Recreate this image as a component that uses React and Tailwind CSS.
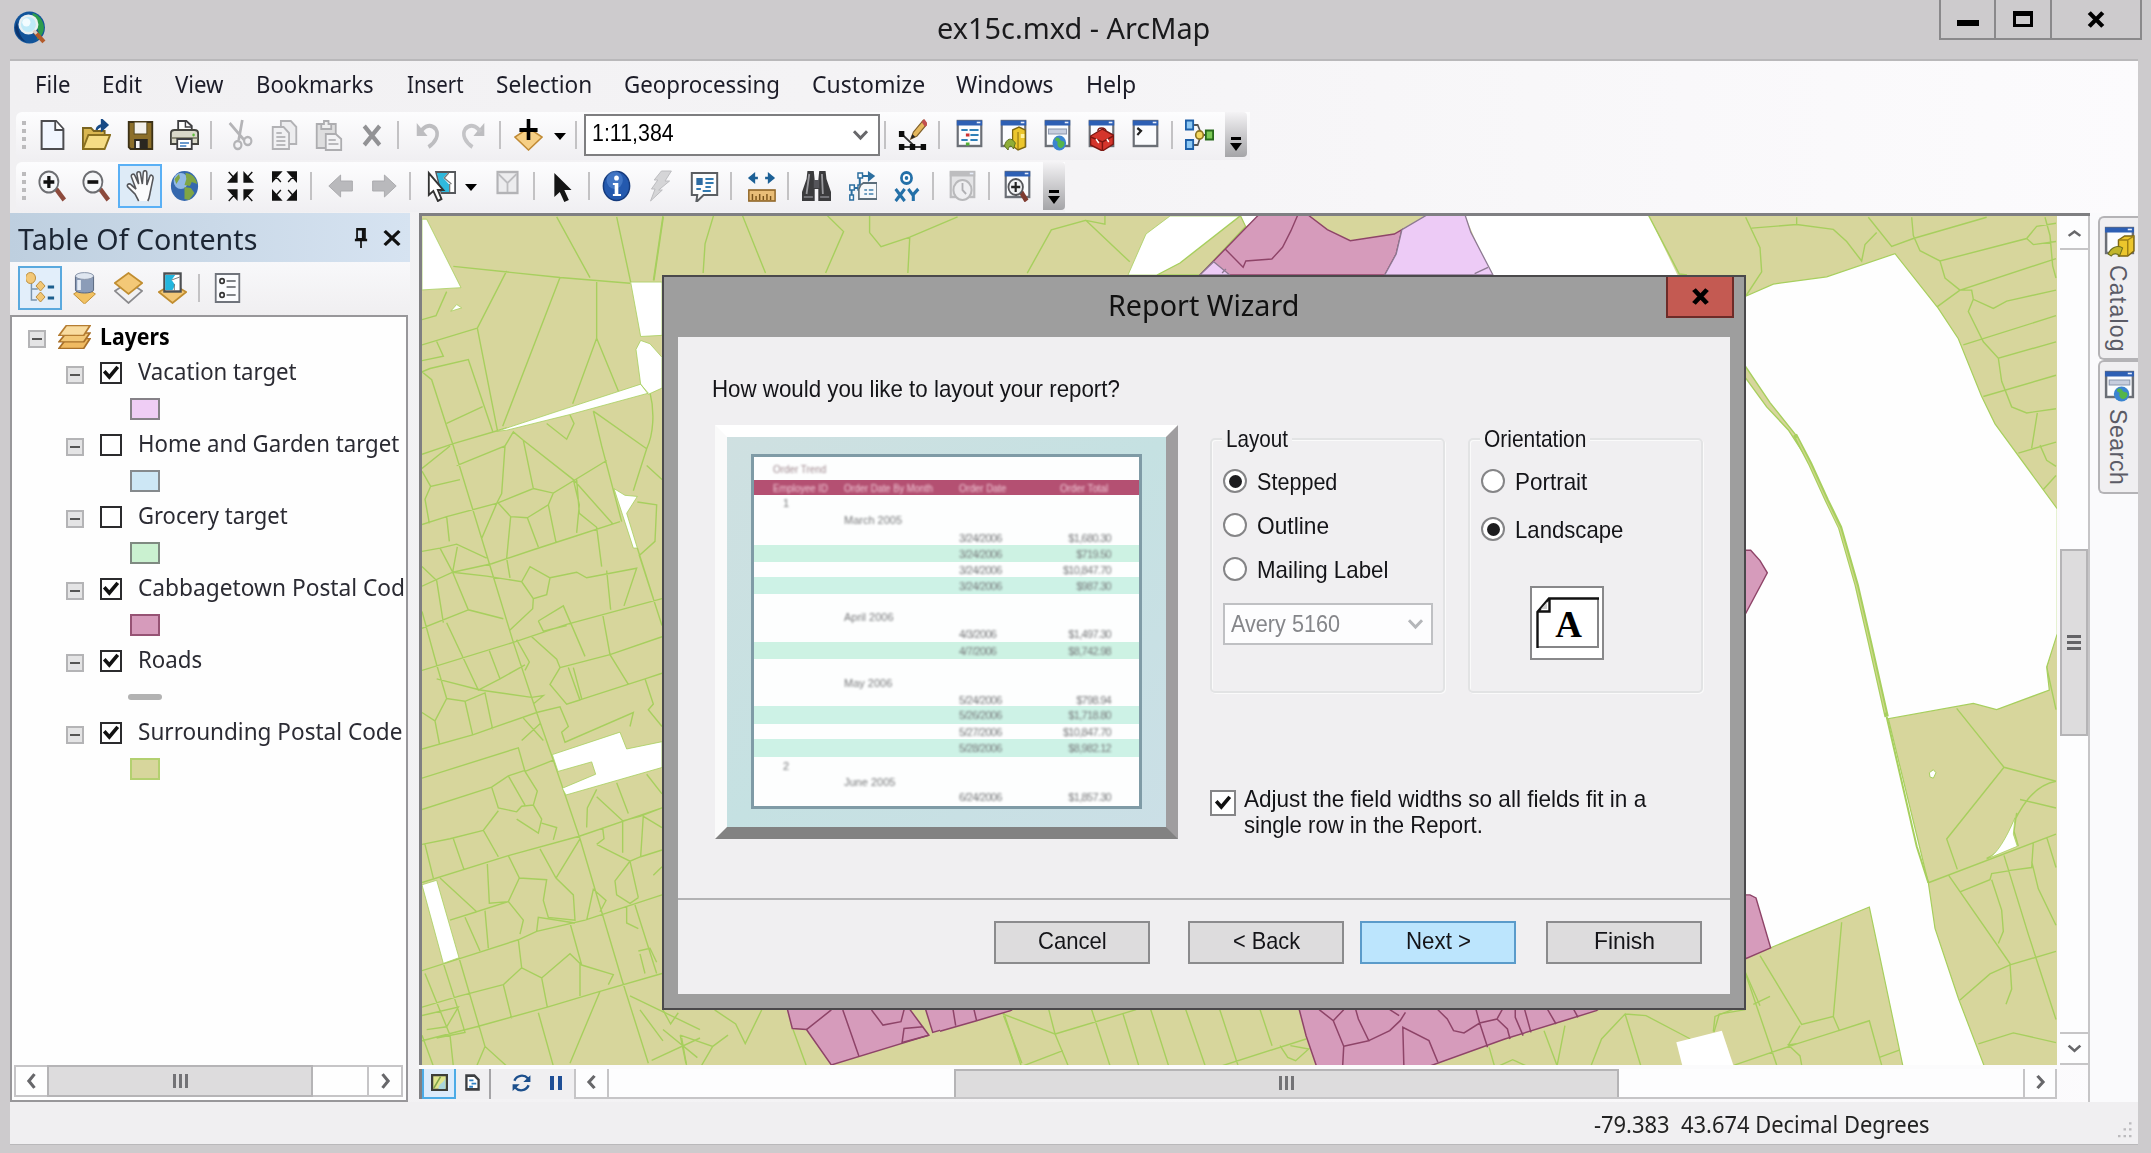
import React, { useLayoutEffect, useRef, useState } from "react";

/* Text squeezed or stretched horizontally to the width of its box. */
function Fit({ className, children }) {
  const outer = useRef(null);
  const inner = useRef(null);
  const [scale, setScale] = useState(1);
  useLayoutEffect(() => {
    setScale(outer.current.clientWidth / inner.current.offsetWidth);
  }, []);
  return (
    <span ref={outer} className={"inline-block shrink-0 whitespace-nowrap " + className}>
      <span ref={inner} className="inline-block origin-left whitespace-pre" style={{ transform: `scaleX(${scale})` }}>
        {children}
      </span>
    </span>
  );
}

const Svg = ({ children, className = "h-8 w-8" }) => (
  <svg viewBox="0 0 32 32" preserveAspectRatio="none" className={"shrink-0 " + className} fill="none">
    {children}
  </svg>
);

const WindowFrame = ({ gray }) => (
  <>
    <rect x="3" y="2" width="26" height="25" fill={gray ? "#e4e4e6" : "#fbfcfe"} stroke={gray ? "#bdbdbf" : "#6b6f76"} strokeWidth="2.4" />
    <rect x="2" y="1.5" width="28" height="5" fill={gray ? "#bdbdbf" : "#2d5fb4"} />
    <path d="M24 3.5h4" stroke="#e8eefa" strokeWidth="1.6" />
  </>
);

const icons = {
  app: (
    <>
      <ellipse cx="15" cy="16" rx="15" ry="15.5" fill="#12549a" />
      <path d="M18 2c6 1 11 8 11 14s-4 10-7 12c1-4 3-6 1-10s-5-3-5-7z" fill="#2e9c4c" />
      <path d="M3 10c1 9 3 16 9 20C6 29 1 23 1 16z" fill="#0b3670" />
      <circle cx="14" cy="13" r="8.5" fill="#bfeaf8" stroke="#e9f0f2" strokeWidth="2.4" />
      <circle cx="12" cy="11" r="4" fill="#f2fcff" />
      <path d="M20 20l9 10" stroke="#b35a2a" strokeWidth="4" />
      <path d="M19 19l3 3" stroke="#d8d0c8" strokeWidth="3" />
    </>
  ),
  newdoc: (
    <>
      <path d="M4 2h16l8 8v20H4z" fill="#f1f6ff" stroke="#4c4c50" strokeWidth="2.2" />
      <path d="M19 2v9h9" fill="#fff" stroke="#4c4c50" strokeWidth="2" />
    </>
  ),
  open: (
    <>
      <path d="M1 30V9h9l3 3h12v5" fill="#d9b650" stroke="#7a6420" strokeWidth="2" />
      <path d="M1 30l6-14h24l-6 14z" fill="#f5dc84" stroke="#8a7020" strokeWidth="2" />
      <path d="M16 11c1-4 4-5 9-5M22 1l6 5-6 5z" stroke="#174a86" strokeWidth="2.4" fill="#174a86" />
    </>
  ),
  save: (
    <>
      <path d="M3 3h26v27H5l-2-2z" fill="#8c6f2a" stroke="#3c3117" strokeWidth="2" />
      <rect x="9" y="3" width="14" height="12" fill="#f3f1ec" stroke="#54461e" />
      <rect x="9" y="20" width="15" height="10" fill="#2a2720" />
      <rect x="11" y="22" width="4" height="7" fill="#f3f3f3" />
    </>
  ),
  print: (
    <>
      <path d="M9 14V2h9l6 5v7" fill="#fff" stroke="#3f3f42" strokeWidth="2" />
      <path d="M17 2v6h7" stroke="#3f3f42" strokeWidth="1.6" />
      <path d="M1 14c0-2 2-3 4-3h22c2 0 4 1 4 3v11H1z" fill="#d9d8c9" stroke="#44443f" strokeWidth="2" />
      <path d="M2 19h28" stroke="#8d8c78" strokeWidth="2" />
      <circle cx="26" cy="16" r="1.4" fill="#5bbd3a" />
      <rect x="8" y="20" width="16" height="10" fill="#fff" stroke="#3f3f42" strokeWidth="2" />
      <path d="M11 24h10M11 27h7" stroke="#3b79bd" strokeWidth="1.6" />
    </>
  ),
  cut: (
    <>
      <path d="M4 4l16 17M18 1l-4 20" stroke="#b4b4b7" strokeWidth="3" />
      <circle cx="13" cy="26" r="4" stroke="#b4b4b7" strokeWidth="2.4" />
      <circle cx="24" cy="22" r="4" stroke="#b4b4b7" strokeWidth="2.4" />
    </>
  ),
  copy: (
    <>
      <path d="M12 2h11l6 6v17H12z" fill="#ededef" stroke="#b2b2b5" strokeWidth="2" />
      <path d="M3 8h12l6 6v16H3z" fill="#f1f1f3" stroke="#b2b2b5" strokeWidth="2" />
      <path d="M7 14h6M7 18h10M7 22h10M7 26h10" stroke="#b9b9bc" strokeWidth="1.8" />
    </>
  ),
  paste: (
    <>
      <rect x="3" y="5" width="21" height="24" fill="#dededf" stroke="#adadb0" strokeWidth="2" />
      <path d="M8 10V5h3V2h5v3h3v5z" fill="#efeff0" stroke="#adadb0" strokeWidth="2" />
      <path d="M13 15h11l6 5v11H13z" fill="#f3f3f5" stroke="#adadb0" strokeWidth="2" />
      <path d="M16 21h8M16 25h11" stroke="#b9b9bc" strokeWidth="1.8" />
    </>
  ),
  del: <path d="M8 7l17 19M25 7L8 26" stroke="#929295" strokeWidth="4.6" />,
  undo: (
    <>
      <path d="M3 4v13h12z" fill="#bdbdc0" />
      <path d="M7 13c5-7 12-8 17-3 4 6 0 13-8 18" stroke="#bdbdc0" strokeWidth="4" />
    </>
  ),
  redo: (
    <>
      <path d="M29 4v13H17z" fill="#bdbdc0" />
      <path d="M25 13C20 6 13 5 8 10c-4 6 0 13 8 18" stroke="#c4c4c7" strokeWidth="4" />
    </>
  ),
  add: (
    <>
      <path d="M16 9l15 9-15 13L1 18z" fill="#f6cf85" stroke="#c08a35" strokeWidth="1.6" />
      <path d="M16 0v21M6 11h20" stroke="#000" strokeWidth="4" />
    </>
  ),
  editor: (
    <>
      <path d="M4 15l14 12M4 28h25" stroke="#333" strokeWidth="1.8" />
      <path d="M1 12h6v6H1zM1 25h6v6H1zM13 25h6v6h-6zM25 25h6v6h-6z" fill="#0c0c0c" />
      <path d="M14 20l3-7L28 1l4 4-11 12z" fill="#e5b85d" stroke="#80602a" strokeWidth="1.2" />
      <path d="M26 3l3-3 4 5-3 3z" fill="#c15050" />
      <path d="M14 20l2-5 3 3z" fill="#222" />
    </>
  ),
  tocwin: (
    <>
      <WindowFrame />
      <path d="M7 11h7M16 11h10M7 21h7M17 16h9M17 21h8" stroke="#2f7fb8" strokeWidth="2.2" />
      <path d="M12 16h4" stroke="#cc3030" strokeWidth="3" />
      <path d="M12 25h4" stroke="#54b035" strokeWidth="3" />
    </>
  ),
  catalog: (
    <>
      <WindowFrame />
      <path d="M15 11l7-3 7 3v17l-8 3-6-4z" fill="#ecc62c" stroke="#7c6511" strokeWidth="1.4" />
      <path d="M21 13v17" stroke="#9c7f14" strokeWidth="1.4" />
      <path d="M24 15h4v4h-4z" fill="#fff2a0" />
      <path d="M6 27c2-8 8-9 12-3l-2 6c-2-4-5-4-6 1z" fill="#8fae38" stroke="#5b6d1c" />
    </>
  ),
  catalogTab: (
    <>
      <WindowFrame />
      <path d="M15 14l6-4h9v15l-6 5h-9z" fill="#ecc62c" stroke="#7c6511" strokeWidth="1.4" />
      <path d="M15 14h9v15M24 14l6-4" stroke="#9c7f14" strokeWidth="1.4" />
      <path d="M5 28c3-7 9-9 14-6l-3 8c-2-3-6-3-8 0z" fill="#c2b62c" stroke="#6b6d1c" />
    </>
  ),
  search: (
    <>
      <WindowFrame />
      <rect x="6" y="10" width="20" height="5" fill="#c7cede" stroke="#8a95ab" />
      <circle cx="18" cy="24" r="7.5" fill="#3b84d0" />
      <path d="M14 19c5-2 4 3 7 3s4 3 1 6-7-1-6-4-4-1-2-5z" fill="#54b54b" />
    </>
  ),
  toolbox: (
    <>
      <WindowFrame />
      <path d="M4 17l13-7 12 6v9l-12 7L4 26z" fill="#d5352c" stroke="#7c1712" strokeWidth="1.4" />
      <path d="M4 18l13 5 12-6M17 23v8M12 12c0-4 8-4 9 0" stroke="#7c1712" strokeWidth="1.6" />
      <path d="M10 20l3 4M22 20l2 3" stroke="#fff" strokeWidth="1.6" />
    </>
  ),
  python: (
    <>
      <WindowFrame />
      <path d="M7 9l4 3-4 4" stroke="#222" strokeWidth="2.4" />
    </>
  ),
  model: (
    <>
      <path d="M10 6h4l4 9-4 11h-4M20 16h6" stroke="#555" strokeWidth="1.8" />
      <rect x="1" y="1.5" width="8" height="9" fill="#8dc8f4" stroke="#1d5fa8" strokeWidth="2" />
      <rect x="1" y="21" width="8" height="9" fill="#8dc8f4" stroke="#1d5fa8" strokeWidth="2" />
      <circle cx="16" cy="16" r="4.2" fill="#f4d860" stroke="#8c7420" strokeWidth="1.8" />
      <rect x="23" y="11.5" width="8" height="9" fill="#7cc956" stroke="#286a1c" strokeWidth="2" />
    </>
  ),
  zoomin: (
    <>
      <path d="M20 19l9 11" stroke="#8d4a3c" strokeWidth="5" />
      <circle cx="12" cy="12" r="10.5" fill="#f6f7f9" stroke="#6d6e72" strokeWidth="2" />
      <path d="M12 6v12M6 12h12" stroke="#111" strokeWidth="3.6" />
    </>
  ),
  zoomout: (
    <>
      <path d="M20 19l9 11" stroke="#8d4a3c" strokeWidth="5" />
      <circle cx="12" cy="12" r="10.5" fill="#f6f7f9" stroke="#6d6e72" strokeWidth="2" />
      <path d="M6 12h12" stroke="#111" strokeWidth="3.6" />
    </>
  ),
  hand: (
    <path
      d="M14 31l-4-7-8-7c-2-3 2-4 4-2l5 4L6 7c-1-3 3-4 4-1l4 8-2-10c0-3 4-3 4 0l2 10 1-11c0-3 4-3 4 0v12l3-8c1-3 4-2 4 1l-3 13c-1 4-1 7-3 10"
      fill="#fbfbfc" stroke="#55565a" strokeWidth="1.7"
    />
  ),
  globe: (
    <>
      <circle cx="16" cy="16" r="15" fill="#3568ae" />
      <circle cx="12" cy="11" r="8" fill="#a9cdf3" opacity=".8" />
      <path d="M17 3c7 0 12 5 13 11l-6-2-2 4-6-1 2-6zM16 17l7 1 4 5-6 7-5-1zM5 9l5-5 1 4-4 6z" fill="#7fa544" />
    </>
  ),
  shrink: (
    <path d="M3 2l7 7M12 3v9H3zM29 2l-7 7M20 3v9h9zM3 31l7-7M12 29v-9H3zM29 31l-7-7M20 29v-9h9z" stroke="#111" strokeWidth="1.6" fill="#111" />
  ),
  grow: (
    <path d="M12 12L5 5M3 11V2h9zM20 12l7-7M29 11V2h-9zM12 20l-7 7M3 21v9h9zM20 20l7 7M29 21v9h-9z" stroke="#111" strokeWidth="1.6" fill="#111" />
  ),
  back: <path d="M2 16L15 5v6h13v10H15v6z" fill="#b9b9bc" stroke="#aaaaad" />,
  fwd: <path d="M30 16L17 5v6H4v10h13v6z" fill="#b9b9bc" stroke="#aaaaad" />,
  select: (
    <>
      <path d="M10 2h21v21H16z" fill="#fff" stroke="#55585c" strokeWidth="2" />
      <path d="M11 3h12l-5 5 7 7v7h-9z" fill="#2fb9dd" />
      <path d="M24 3l-5 5 8 6M25 14v8" stroke="#777" strokeWidth="1.4" />
      <path d="M2 3v22l5-4 5 10 4-2-4-9h6z" fill="#fff" stroke="#333" strokeWidth="2" />
    </>
  ),
  clear: (
    <>
      <rect x="5" y="2" width="22" height="21" fill="#ececee" stroke="#b3b3b6" strokeWidth="2.4" />
      <path d="M6 4l10 9v9M26 4l-10 9" stroke="#bdbdc0" strokeWidth="2" />
    </>
  ),
  pointer: <path d="M7 3v24l6-5 5 10 5-2-5-10h8z" fill="#151515" />,
  info: (
    <>
      <circle cx="16" cy="16" r="14.5" fill="#2459ae" stroke="#153a7c" strokeWidth="1.6" />
      <circle cx="14" cy="10" r="9" fill="#5e92da" opacity=".5" />
      <circle cx="16" cy="8" r="2.6" fill="#fff" />
      <path d="M12 13h6v11h3v2h-9v-2h2v-9h-2z" fill="#fff" />
    </>
  ),
  bolt: <path d="M17 1h11l-7 10h5L14 20h4L5 31l5-12H6l7-9H9z" fill="#d5d5d7" stroke="#bbbbbe" />,
  html: (
    <>
      <path d="M2 3h28v22H15l-8 7 1-7H2z" fill="#fdfdfd" stroke="#5b5e62" strokeWidth="2.2" />
      <rect x="7" y="8" width="7" height="7" fill="#2d6ba2" />
      <path d="M17 9h9M17 13h9M7 19h5M17 17h6M14 21h9" stroke="#3179b0" strokeWidth="2" />
    </>
  ),
  measure: (
    <>
      <path d="M3 8h9M20 8h9" stroke="#1c6096" strokeWidth="2.6" />
      <path d="M9 2L1 8l8 6zM23 2l8 6-8 6z" fill="#1c6096" />
      <rect x="2" y="20" width="29" height="11" fill="#e9bd77" stroke="#8f6526" strokeWidth="1.6" />
      <path d="M6 30v-6M10 30v-4M14 30v-6M18 30v-4M22 30v-6M26 30v-4" stroke="#7a541b" strokeWidth="1.6" />
    </>
  ),
  binoc: (
    <>
      <path d="M6 1h7l1 9h4l1-9h7l1 8 5 13v9H18V19h-4v12H0V22L5 9z" fill="#3b3b3d" />
      <rect x="13" y="10" width="6" height="8" fill="#55555a" />
      <path d="M8 4L5 24M22 4l1 20" stroke="#9a9a9e" strokeWidth="2" />
      <path d="M2 27h10M20 27h10" stroke="#85858a" strokeWidth="1.6" />
    </>
  ),
  route: (
    <>
      <path d="M4 28v-10h9V6h11" stroke="#2b6e9f" strokeWidth="2.2" />
      <path d="M22 1l8 5-8 6z" fill="#2b6e9f" />
      <path d="M2 25h4v5H2zM2 15h5v5H2zM11 15h5v5h-5zM11 3h5v5h-5z" fill="#fff" stroke="#2b6e9f" strokeWidth="1.6" />
      <path d="M14 15l3-2h15v16H12V19z" fill="#f6f8fa" stroke="#5b6d7a" strokeWidth="1.8" />
      <path d="M18 20h3M23 20h5M18 24h3M23 24h5" stroke="#6f9ec0" strokeWidth="1.8" />
    </>
  ),
  xy: (
    <>
      <circle cx="16" cy="8" r="5.6" fill="#fff" stroke="#2470a8" strokeWidth="3" />
      <circle cx="16" cy="8" r="2" fill="#2470a8" />
      <path d="M4 19l10 12M14 19L4 31M18 19l5 6 6-6M23.500 25v6" stroke="#2470a8" strokeWidth="3.4" />
    </>
  ),
  clock: (
    <>
      <WindowFrame gray />
      <circle cx="16" cy="20" r="10" fill="#efeff1" stroke="#b9b9bb" strokeWidth="2.2" />
      <path d="M16 13v7l4 4" stroke="#b0b0b3" strokeWidth="2" />
    </>
  ),
  viewer: (
    <>
      <WindowFrame />
      <path d="M20 22l6 9" stroke="#7f3b30" strokeWidth="5" />
      <circle cx="14" cy="17" r="8" fill="#f1f2f4" stroke="#55565a" strokeWidth="2" />
      <path d="M14 12v10M9 17h10" stroke="#222" strokeWidth="2.4" />
    </>
  ),
  listOrder: (
    <>
      <path d="M6 10v18h6M6 17h7" stroke="#7a94ac" strokeWidth="1.6" />
      <ellipse cx="5" cy="6" rx="5.5" ry="5.5" fill="#f3c877" stroke="#b98a3a" />
      <path d="M16 9l5 5-5 5-5-5zM16 20l5 5-5 5-5-5z" fill="#f3c877" stroke="#b98a3a" />
      <path d="M24 15h7M24 26h7" stroke="#1c5e8e" strokeWidth="3" />
    </>
  ),
  source: (
    <>
      <path d="M16 15l12 7-12 10L4 22z" fill="#f2c263" stroke="#c08d30" />
      <path d="M6 4v14c0 4 20 4 20 0V4z" fill="#8b9cb8" stroke="#56647c" />
      <ellipse cx="16" cy="4" rx="10" ry="3.4" fill="#dfe6f0" stroke="#8793a8" />
      <path d="M10 8v10" stroke="#e6ecf5" strokeWidth="4" />
    </>
  ),
  visibility: (
    <>
      <path d="M16 10l15 9-15 12L1 19z" fill="#f1f1f2" stroke="#8a8a8d" strokeWidth="1.8" />
      <path d="M16 1l15 10-15 11L1 11z" fill="#f3c877" stroke="#c08d30" strokeWidth="1.8" />
    </>
  ),
  selection: (
    <>
      <path d="M16 12l15 8-15 11L1 20z" fill="#f3c877" stroke="#c08d30" strokeWidth="1.8" />
      <rect x="7" y="1.5" width="18" height="18" fill="#fff" stroke="#4c4f52" strokeWidth="2.4" />
      <path d="M8 3h11l-4 5 4 5-3 5H8z" fill="#23b6de" />
      <path d="M24 5l-9 3M18 12v7" stroke="#777" />
    </>
  ),
  options: (
    <>
      <rect x="3" y="2" width="26" height="28" fill="#fbfcfe" stroke="#70747c" strokeWidth="2" />
      <circle cx="10" cy="9" r="2.4" stroke="#333" strokeWidth="1.8" />
      <circle cx="10" cy="23" r="2.4" stroke="#333" strokeWidth="1.8" />
      <path d="M15 9h10M15 15h10M15 23h10" stroke="#808388" strokeWidth="2.2" />
    </>
  ),
  layers: (
    <>
      <path d="M8 18h23l-6 12H1z" fill="#efba62" stroke="#a8702a" strokeWidth="1.8" />
      <path d="M8 11h23l-6 11H1z" fill="#f3c877" stroke="#a8702a" strokeWidth="1.8" />
      <path d="M8 2h23l-6 12H1z" fill="#f9dca0" stroke="#b57d32" strokeWidth="1.8" />
    </>
  ),
};

const Tool = ({ name, className = "" }) => (
  <div className={"flex h-[44px] w-[44px] shrink-0 items-center justify-center " + className}>
    <Svg className="h-8 w-[29px]">{icons[name]}</Svg>
  </div>
);
const Sep = ({ className = "" }) => (
  <div className={"flex w-[10px] shrink-0 justify-center " + className}>
    <div className="h-[28px] w-[2px] bg-[#c3c2c4]" />
  </div>
);
const Caret = ({ className = "" }) => (
  <div className={"flex w-4 shrink-0 justify-center pt-1 " + className}>
    <div className="h-0 w-0 border-x-[6px] border-t-[7px] border-x-transparent border-t-black" />
  </div>
);
const Grip = () => (
  <div className="flex w-[12px] shrink-0 flex-col items-center gap-[4px]">
    {[0, 1, 2, 3].map((i) => (
      <div key={i} className="h-[4px] w-[4px] bg-[#bcbbbd]" />
    ))}
  </div>
);
const Overflow = ({ className }) => (
  <div className={"flex w-[22px] shrink-0 flex-col items-center justify-end rounded-r-sm bg-linear-to-b from-[#f4f3f5] to-[#a5a5a8] pb-[6px] " + className}>
    <div className="mb-[3px] h-[3px] w-[10px] bg-black" />
    <div className="h-0 w-0 border-x-[6px] border-t-[8px] border-x-transparent border-t-black" />
  </div>
);

const Chevron = ({ dir, className = "", color = "#67676a" }) => {
  const d = { left: "M20 5L11 16l9 11", right: "M12 5l9 11-9 11", up: "M5 21l11-9 11 9", down: "M5 10l11 11 11-11" }[dir];
  return (
    <Svg className={className || "h-5 w-5"}>
      <path d={d} stroke={color} strokeWidth="5" />
    </Svg>
  );
};

const Lines3 = ({ vertical }) => (
  <div className={"flex gap-[3px] " + (vertical ? "flex-col" : "")}>
    {[0, 1, 2].map((i) => (
      <div key={i} className={vertical ? "h-[3px] w-[14px] bg-[#636366]" : "h-[14px] w-[3px] bg-[#737376]"} />
    ))}
  </div>
);

const Check = ({ checked, className = "h-[22px] w-[22px] border-[#2b2b2d]" }) => (
  <div className={"flex shrink-0 items-center justify-center border-2 bg-white " + className}>
    {checked && (
      <Svg className="h-[18px] w-[18px]">
        <path d="M4 13l9 10L28 5" stroke="#111" strokeWidth="6.4" />
      </Svg>
    )}
  </div>
);
const Minus = () => (
  <div className="mt-[4px] flex h-[18px] w-[18px] shrink-0 items-center justify-center border-2 border-[#b4b4b6] bg-[#e4e4e5]">
    <div className="h-[2px] w-[10px] bg-[#555]" />
  </div>
);

const tocRows = [
  ["Vacation target", "w-[159px]", true, "bg-[#efcdf5] border-[#858187]"],
  ["Home and Garden target", "w-[261px]", false, "bg-[#cde7f5] border-[#858a8d]"],
  ["Grocery target", "w-[150px]", false, "bg-[#caf1d0] border-[#7f8a81]"],
  ["Cabbagetown Postal Cod", "w-[267px]", true, "bg-[#d69bbb] border-[#965374]"],
  ["Roads", "w-[64px]", true, null],
  ["Surrounding Postal Code", "w-[264px]", true, "bg-[#d7d69c] border-[#b3d070]"],
];

const menu = [
  ["File", "ml-[25px] w-[35px]"],
  ["Edit", "ml-[32px] w-[40px]"],
  ["View", "ml-[33px] w-[49px]"],
  ["Bookmarks", "ml-[32px] w-[118px]"],
  ["Insert", "ml-[33px] w-[57px]"],
  ["Selection", "ml-[32px] w-[96px]"],
  ["Geoprocessing", "ml-[32px] w-[156px]"],
  ["Customize", "ml-[32px] w-[113px]"],
  ["Windows", "ml-[31px] w-[98px]"],
  ["Help", "ml-[32px] w-[50px]"],
];

/* ---- Map ---- */
const G = ({ t, children }) => <g transform={t}>{children}</g>;
const ve = { vectorEffect: "non-scaling-stroke" };

const westRoads = `M160 120L480 140L690 150M470 32L570 140M650 32L692 148M790 32L762 145M320 128L232 230L292 412M480 140L308 405M590 145V248L518 365M590 248L655 342
M66 215L108 208L140 165M66 260L232 230M66 288L130 280L110 254M66 308L90 302L205 286L278 414M66 308L95 322L140 405L160 440L245 605L340 790L410 915L460 1000L540 1140L605 1270L665 1390L745 1540
M66 455L160 436L320 408M140 400L248 370M170 475L315 440L340 415L370 430L520 500L640 580M315 440L305 525L292 540M66 485L92 512L180 500M66 480L150 440M92 512L75 535L88 578M66 580L140 566L292 542L400 516L460 524L620 466M370 430L400 516M292 540L245 605M292 540L332 566L320 640L330 675M332 566L382 568L415 620M382 568L445 545L460 524M445 545L468 612M520 500L538 545L530 595M530 500L538 560L590 585L605 655M140 566L148 610M66 628L120 622L170 615L260 640M120 622L158 665L172 620M158 665L275 650L400 625L530 600L660 575
M66 655L110 680L130 755M66 690L158 665L260 672L365 682L390 655L450 675L440 705L400 712L365 682M158 665L205 732L310 748M205 732L66 765M450 675L530 665L560 675L710 658L672 725M620 662L632 732M400 712L398 730L330 768M415 752L490 725L555 815M415 752L430 770L500 760M66 735L110 830L140 890M140 755L235 875L300 855L268 805M66 840L340 790L500 758L786 712M350 785L388 825L375 840M395 780L470 820L480 835L450 865L500 900L540 893L505 835M520 835L545 890M480 835L630 812L786 780M608 740L630 812L685 865M110 855L240 875L395 888L430 885L400 900M300 855L375 830M500 900L735 855L786 845M735 855L760 900L745 910L786 940
M66 915L105 930L118 970M105 930L140 890L195 895L255 880L278 945M195 895L218 955M66 980L218 955L410 915L480 905L505 940L485 950L495 968L700 915L690 940M66 1032L355 978L375 1020L412 1055L400 1080M375 1020L460 1000M66 1088L275 1048L325 1028L375 1018M275 1048L295 1085L350 1092L365 1082L400 1080L425 1105L415 1130L350 1105M325 1028L375 1080M295 1090L250 1125L295 1172M425 1112L470 1120L460 1142M370 925L430 965M365 965L420 935M66 1150L150 1140L250 1125M75 1150L100 1210M160 1140L192 1195M66 1218L325 1170L540 1135L786 1085M325 1170L358 1210L325 1252L268 1255L262 1185M358 1210L440 1213L430 1250L445 1280L525 1285L520 1240L468 1210L420 1158M468 1210L540 1140M120 1210L230 1270L325 1252L370 1285L360 1310M150 1285L230 1270M195 1280L240 1340M255 1268L265 1335M66 1375L355 1320L410 1305L555 1285L786 1240M410 1305L415 1280L525 1290M560 1285L580 1230L618 1250L600 1270M355 1320L365 1370L425 1388L510 1345L545 1365L640 1382L625 1400M365 1370L310 1400L335 1460M425 1388L442 1440M540 1360V1420M510 1290L545 1365M66 1440L180 1420L310 1400M66 1500L230 1475L442 1440L600 1412L786 1380M75 1380L150 1490L160 1545M177 1352L255 1510L320 1545M130 1362L172 1440L195 1485L110 1495M66 1455L175 1440L140 1475L80 1480M66 1490L100 1545M255 1510L230 1545M415 1450L460 1545M600 1412L510 1540M690 1420L900 1480M755 1535L900 1495M845 1495L860 1545
M580 378L605 440L665 575M580 378L740 445M750 345C765 380 760 420 740 445L700 520M740 475L786 500M712 540L770 545L765 610L718 635L786 760M712 622L760 712M440 400L500 428L522 400L510 385
M560 1120L562 1085L590 1052M590 1065L668 1108V1165M650 1040L685 1095M740 1025L786 1060M668 1108L720 1100L786 1085M730 1098L722 1172M730 1100L786 1120M590 1150L640 1165L690 1180L722 1172L786 1160M608 1120L612 1140L590 1150M690 1180L645 1215L650 1240L690 1255L715 1245M680 1260V1290L715 1300M705 1258L770 1380M715 1340L750 1335L770 1360M720 1345L735 1380M690 1180L715 1245M760 1205L786 1190`;

const eastRoads = `M137 30L180 80L185 120L137 160M155 48L290 42L400 50L440 70L485 102L495 75L530 55M290 30V42M505 30L575 78L640 65L860 30M635 30L640 60L660 85L720 102L980 65L1010 45L1068 40M980 65L1000 75L1068 70M1035 30L1050 60L1058 110L1068 130M720 102L735 130L780 150L1068 98M780 150L710 178M780 150L815 150L820 165L880 180L920 168L1068 150M820 165L805 185L850 235L895 262L1068 235M790 240L1068 192M895 262L905 300L935 342L980 352L1068 345M850 325L1068 290M1012 352L995 410M955 418L1068 400M1020 405L1040 430L1068 440M1030 478L1068 455
M770 838L912 935L1068 958M912 935L740 1053L772 1103M1068 958C1000 965 960 1000 925 1045C900 1075 880 1080 860 1085M960 988L1068 1002M950 1010L942 1040L955 1065M685 1125L1068 1045M1040 1050L1068 1100M1000 1058L995 1100L925 1105M995 1090L1015 1135L1068 1195M745 1112L930 1258L935 1300L918 1325M780 1140L870 1120L875 1110L930 1105M875 1120L905 1170L910 1205L895 1225M912 1080L985 1210L1068 1350M1068 1238L930 1260L870 1275L780 1318M835 1390L940 1372L1068 1388M1040 770L1068 840M1068 715L1040 770
M180 1245L305 1358L400 1345L425 1190M137 1275L230 1425M160 1325L210 1312M400 1345L418 1368L508 1352L545 1425M418 1368L290 1390L265 1392L300 1410L305 1425M265 1392L300 1360M103 1425L290 1390M540 1412L600 1400M40 1370L45 1345L137 1325`;

const southRoads = `M120 512L155 680M120 525L220 585L245 680M160 680L235 635M208 512L220 585L375 512M290 512L325 680M350 525L380 680M403 512L437 680M470 512L507 680M535 512L570 680M612 512L635 620M540 680L700 600M650 620L665 655L680 665L705 630L670 620M1155 575L1180 680L1195 560M1245 680L1265 600L1310 525L1340 680M1310 525L1350 530L1435 600M1050 625L1060 680M1070 680L1095 662L1120 680M1480 580L1490 525L1540 512M1540 400L1568 500`;

const northRoads = `M60 30L35 145M192 30L170 80L165 132M268 30L328 132M490 30L532 58L485 132M600 60L630 85L705 68L830 32M600 60L600 30M705 68L700 132M1012 132L1075 55L1165 38L1280 112M1165 38L1215 45V30
M60 1445L80 1470L100 1450M195 1445L250 1470L275 1505L318 1445M105 1490L120 1540M105 1490L190 1510L230 1490M190 1510L160 1545M400 1480L435 1545M60 1480L150 1530M950 1455L998 1540M0 1445L60 1500`;

const MapView = () => (
  <svg viewBox="422 217 1635 849" className="block h-[849px] w-[1635px]" preserveAspectRatio="none">
    <rect x="422" y="217" width="1635" height="849" fill="#d7d69c" />
    <G t="translate(400 200) scale(.33333 .5612)">
      <path {...ve} d={westRoads} fill="none" stroke="#a7cf5e" strokeWidth="1.4" />
      <path
        {...ve}
        d="M66 36h14L183 158L66 162zM152 200L170 188L185 194zM692 148H786V243L722 245zM722 252L750 258L786 282V337L745 348L722 330L708 268zM290 414L500 373L722 330L745 346L510 384L320 412zM642 516L675 528L712 530L680 560L712 622L700 622zM457 990L660 950L680 980L786 967V1013L498 1062L487 1050L587 1025L575 1003L474 1020zM66 1222L110 1214L177 1352L130 1362z"
        fill="#fff" stroke="#a7cf5e" strokeWidth=".8"
      />
    </G>
    <G t="translate(640 200) scale(.38265 .5612)">
      <path {...ve} d={northRoads} fill="none" stroke="#a7cf5e" strokeWidth="1.4" />
      <g fill="#d69bbb" stroke="#8e4468" strokeWidth="1.5">
        <path {...ve} d="M380 1430H690L755 1490L500 1543L435 1480L398 1478z" />
        <path {...ve} d="M740 1430H1000L970 1445L765 1485z" />
        <path {...ve} d="M435 1480L500 1445M530 1445L572 1527M605 1445L635 1472L682 1466L690 1445M755 1490L685 1503L690 1478L740 1475M812 1445L822 1475M872 1440L880 1462" fill="none" />
      </g>
    </G>
    <path d="M1170 217L1146 235L1128 276H1168L1241 217z" fill="#fff" stroke="#a7cf5e" strokeWidth=".8" />
    <G t="translate(1180 200) scale(.38265 .33333)">
      <path {...ve} d="M0 192L158 50L172 82L52 228H-60z" fill="#d7d69c" stroke="#a7cf5e" strokeWidth="1.4" />
      <path d="M160 50H210L173 82z" fill="#fff" />
      <path d="M745 50H1225L1305 240H815z" fill="#fff" />
      <path {...ve} d="M205 48H335L385 92L445 125L560 105L580 92L565 165L535 228H52z" fill="#d69bbb" stroke="#8e4468" strokeWidth="1.4" />
      <path {...ve} d="M580 92L645 48H745L760 100L818 228H535L565 165z" fill="#edcbf6" stroke="#8d7a92" strokeWidth="1.3" />
      <path {...ve} d="M88 188L130 228H52z" fill="#edcbf6" stroke="#8d7a92" strokeWidth="1.3" />
      <path {...ve} d="M118 150L165 205L172 186L240 180L268 145L290 95L307 50" fill="none" stroke="#8e4468" strokeWidth="1.4" />
      <path {...ve} d="M770 224L805 205M110 222L120 210" fill="none" stroke="#8d7a92" strokeWidth="1.3" />
      <path {...ve} d="M1225 50L1305 225L1325 228" fill="none" stroke="#a7cf5e" strokeWidth="1.4" />
    </G>
    <G t="translate(1700 200) scale(.33333 .60778)">
      <path {...ve} d={eastRoads} fill="none" stroke="#a7cf5e" strokeWidth="1.4" />
      <path
        {...ve}
        d="M100 170L137 160L220 140L380 128L585 90L715 180L775 230L845 325L885 370L1072 510V715L1040 770L1048 808L890 840L820 830L565 855L685 1125L705 1200L775 1315L855 1430H610L508 1165L212 1232L100 1255z"
        fill="#fefefe" stroke="#a7cf5e" strokeWidth="1.2"
      />
      <path {...ve} d="M860 1086C890 1080 920 1050 945 1018L940 1045L952 1065z" fill="#fff" stroke="#a7cf5e" strokeWidth=".8" />
      <path {...ve} d="M688 944L700 939L708 944L700 953L690 951z" fill="#fff" stroke="#a7cf5e" />
      <path {...ve} d="M120 262L210 335L290 390L330 435L265 380L200 342L120 282z" fill="#d7d69c" stroke="#a7cf5e" strokeWidth="1.4" />
      <path {...ve} d="M285 388L330 435L380 495L420 540L470 635L510 730L560 852" fill="none" stroke="#a7cf5e" strokeWidth="4.4" />
      <path {...ve} d="M290 393L330 437L380 497L420 543L470 638L510 733L556 845" fill="none" stroke="#cfd88a" strokeWidth="1.2" />
      <path {...ve} d="M560 852L650 1065L685 1125" fill="none" stroke="#a7cf5e" strokeWidth="2" />
      <path {...ve} d="M100 578H152L180 595L202 615L137 682zM100 1145H150L168 1150L212 1232L137 1250z" fill="#d69bbb" stroke="#8e4468" strokeWidth="1.4" />
    </G>
    <G t="translate(940 840) scale(.52296 .33333)">
      <path {...ve} d={southRoads} fill="none" stroke="#a7cf5e" strokeWidth="1.4" />
      <path {...ve} d="M1408 610L1495 575L1518 683H1420z" fill="#fff" />
      <g stroke="#8e4468" strokeWidth="1.5" fill="none">
        <path {...ve} d="M685 500H1270L1255 515L1080 600L935 682H720L700 590z" fill="#d69bbb" />
        <path {...ve} d="M0 500H150L135 515L70 545L0 577" fill="#d69bbb" />
        <path {...ve} d="M25 512L30 560M65 512L70 545M725 512L752 545L772 622L770 680M752 545L772 512M795 512L800 540L820 605L772 622M820 605L860 575L880 545L890 520M860 512L878 530M887 680L885 565L935 605L952 670M952 512L970 540L982 575L1002 582L1032 552L1065 540L1075 512M1025 512L1032 552L1047 625M1065 540L1085 570L1090 600M1100 512V535L1115 590M1118 512L1130 580M1162 512L1178 555M1212 512L1220 535" />
      </g>
    </G>
  </svg>
);

/* ---- Dialog ---- */
const reportRows = [
  ["h-[16px]", "1", "", "", ""],
  ["h-[17px]", "", "March 2005", "", ""],
  ["h-[17px] pt-[3px]", "", "", "3/24/2006", "$1,680.30"],
  ["h-[17px] bg-[#cdf2e3]", "", "", "3/24/2006", "$719.50"],
  ["h-[15px]", "", "", "3/24/2006", "$10,847.70"],
  ["h-[17px] bg-[#cdf2e6]", "", "", "3/24/2006", "$987.30"],
  ["h-[13px]", "", "", "", ""],
  ["h-[19px]", "", "April 2006", "", ""],
  ["h-[16px]", "", "", "4/3/2006", "$1,497.30"],
  ["h-[17px] bg-[#cdf2e3]", "", "", "4/7/2006", "$8,742.98"],
  ["h-[14px]", "", "", "", ""],
  ["h-[20px]", "", "May 2006", "", ""],
  ["h-[13px]", "", "", "5/24/2006", "$798.94"],
  ["h-[18px] bg-[#cdf2e6]", "", "", "5/26/2006", "$1,718.80"],
  ["h-[15px]", "", "", "5/27/2006", "$10,847.70"],
  ["h-[18px] bg-[#cdf2e6]", "", "", "5/28/2006", "$8,982.12"],
  ["h-[17px]", "2", "", "", ""],
  ["h-[15px]", "", "June 2005", "", ""],
  ["h-[16px]", "", "", "6/24/2006", "$1,857.30"],
];

const ReportPreview = () => (
  <div className="h-[414px] w-[463px] shrink-0 border-[12px] border-t-white border-r-[#9f9d9f] border-b-[#828282] border-l-[#fafafa] bg-linear-to-br from-[#cfe0e1] via-[#c5e1e2] to-[#cbdfe6] pt-[17px] pl-[24px]">
    <div className="flex h-[355px] w-[391px] flex-col border-[3px] border-[#7f9ba6] bg-[#fdfefe] font-['Liberation_Sans',sans-serif] text-[11px] leading-[14px] text-[#77797b]">
      <div className="flex h-[23px] items-center pl-[19px] text-[#a08a90] blur-[1px]">
        <Fit className="w-[53px]">Order Trend</Fit>
      </div>
      <div className="flex h-[15px] items-center bg-[#b45072] pl-[19px] text-[#f0c9d6]">
        <div className="flex blur-[1px]">
          <Fit className="w-[55px]">Employee ID</Fit>
          <Fit className="ml-[16px] w-[89px]">Order Date By Month</Fit>
          <Fit className="ml-[26px] w-[47px]">Order Date</Fit>
          <Fit className="ml-[54px] w-[48px]">Order Total</Fit>
        </div>
      </div>
      {reportRows.map(([cls, a, b, c, d], i) => (
        <div key={i} className={"flex shrink-0 items-center " + cls}>
          <div className="flex w-full blur-[1px]">
            <span className="w-[90px] pl-[29px]">{a}</span>
            <span className="w-[115px]">{b}</span>
            <span className="w-[60px] tracking-[-0.7px]">{c}</span>
            <span className="w-[92px] text-right tracking-[-0.7px]">{d}</span>
          </div>
        </div>
      ))}
    </div>
  </div>
);

const Radio = ({ on, label, w }) => (
  <div className="flex h-6 items-center">
    <div className="flex h-6 w-6 shrink-0 items-center justify-center rounded-full border-2 border-[#858587] bg-white">
      {on && <div className="h-[13px] w-[13px] rounded-full bg-[#1c1c1e]" />}
    </div>
    <Fit className={"mt-[2px] ml-[10px] " + w}>{label}</Fit>
  </div>
);

const Group = ({ legend, w, children, className }) => (
  <div className={"relative flex h-[255px] w-[235px] flex-col rounded-[5px] border-2 border-[#e2e3e4] pl-[11px] shadow-[inset_1px_1px_0_#fafafa,1px_1px_0_#fafafa] " + className}>
    <div className="absolute top-[-15px] left-[10px] bg-[#f0eff1] px-[4px]">
      <Fit className={w}>{legend}</Fit>
    </div>
    {children}
  </div>
);

const DlgButton = ({ label, w, className }) => (
  <div className={"flex h-[43px] w-[156px] items-center justify-center border-2 pb-[3px] " + className}>
    <Fit className={w}>{label}</Fit>
  </div>
);

const Dialog = () => (
  <div className="absolute top-[275px] left-[662px] flex h-[735px] w-[1084px] flex-col border-2 border-[#4a494b] bg-[#9e9e9e]">
    <div className="flex h-[60px] shrink-0 justify-between">
      <Fit className="mt-[7px] ml-[444px] w-[191px] text-[29px] leading-[42px] text-[#111]">Report Wizard</Fit>
      <div className="mr-[10px] flex h-[41px] w-[68px] items-center justify-center border-2 border-t-0 border-[#6d2b28] bg-[#c45a52]">
        <Svg className="h-[17px] w-[19px]">
          <path d="M5 3l22 26M27 3L5 29" stroke="#000" strokeWidth="8" />
        </Svg>
      </div>
    </div>
    <div className="ml-[14px] flex h-[657px] w-[1052px] flex-col bg-[#f0eff1] font-['Liberation_Sans',sans-serif] text-[24px] leading-[28px] text-[#141418]">
      <div className="h-[88px] shrink-0 pt-[38px] pl-[34px]">
        <Fit className="w-[408px]">How would you like to layout your report?</Fit>
      </div>
      <div className="flex h-[473px] shrink-0 pl-[37px]">
        <ReportPreview />
        <div className="ml-[32px]">
          <div className="flex gap-[23px] pt-[13px]">
            <Group legend="Layout" w="w-[62px]" className="pt-[29px]">
              <div className="flex flex-col gap-[20px]">
                <Radio on label="Stepped" w="w-[80px]" />
                <Radio label="Outline" w="w-[72px]" />
                <Radio label="Mailing Label" w="w-[131px]" />
              </div>
              <div className="mt-[22px] flex h-[42px] w-[210px] items-center justify-between border-2 border-[#bfc0c3] bg-[#fdfdfe] pr-[6px] pl-[6px] text-[#85868a]">
                <Fit className="w-[109px]">Avery 5160</Fit>
                <Chevron dir="down" className="h-5 w-[19px]" color="#b4b6b9" />
              </div>
            </Group>
            <Group legend="Orientation" w="w-[102px]" className="pt-[29px]">
              <div className="flex flex-col gap-[24px]">
                <Radio label="Portrait" w="w-[72px]" />
                <Radio on label="Landscape" w="w-[108px]" />
              </div>
              <div className="mt-[45px] ml-[49px] h-[74px] w-[74px] border-2 border-[#88888a] bg-white pt-[9px] pl-[4px]">
                <div className="relative flex h-[52px] w-[63px] items-end justify-center">
                  <svg viewBox="0 0 63 52" className="absolute inset-0 h-full w-full" fill="none">
                    <path d="M62 2v48H1" stroke="#858587" strokeWidth="2" />
                    <path d="M1.5 51V15L13 1.5h50M1.5 14.5H13.5V1.5" stroke="#111" strokeWidth="2.4" />
                    <path d="M5 12L11 5v7z" fill="#ccc" />
                  </svg>
                  <span className="mb-[3px] ml-[2px] font-['Liberation_Serif',serif] text-[37px] leading-[42px] font-bold text-black">A</span>
                </div>
              </div>
            </Group>
          </div>
          <div className="mt-[97px] flex">
            <Check checked className="h-[26px] w-[26px] border-[#858587]" />
            <div className="mt-[-4px] ml-[8px] flex flex-col leading-[26px]">
              <Fit className="w-[402px]">Adjust the field widths so all fields fit in a</Fit>
              <Fit className="w-[239px]">single row in the Report.</Fit>
            </div>
          </div>
        </div>
      </div>
      <div className="flex h-[96px] border-t-2 border-[#b2b2b4] pt-[21px] pl-[316px]">
        <DlgButton label="Cancel" w="w-[69px]" className="border-[#8b8b8d] bg-[#dddcdd]" />
        <DlgButton label="< Back" w="w-[67px]" className="ml-[38px] border-[#8b8b8d] bg-[#dddcdd]" />
        <DlgButton label="Next >" w="w-[65px]" className="ml-[16px] border-[#5b9bca] bg-[#bce5fd]" />
        <DlgButton label="Finish" w="w-[61px]" className="ml-[30px] border-[#8b8b8d] bg-[#dddcdd]" />
      </div>
    </div>
  </div>
);

/* ---- Window chrome ---- */
const TitleBar = () => (
  <div className="flex h-[59px] shrink-0 items-start">
    <Svg className="mt-[11px] ml-[14px] h-[33px] w-[33px]">{icons.app}</Svg>
    <Fit className="mt-[7px] ml-[890px] w-[273px] text-[29px] leading-[42px] text-[#1a1a1c]">ex15c.mxd - ArcMap</Fit>
    <div className="ml-[729px] flex h-[40px] w-[203px] border-2 border-t-0 border-[#8a898b]">
      <div className="flex w-[55px] items-center justify-center border-r-2 border-[#8a898b] pt-[7px]">
        <div className="h-[6px] w-[22px] bg-black" />
      </div>
      <div className="flex w-[56px] items-center justify-center border-r-2 border-[#8a898b]">
        <div className="h-[16px] w-[20px] border-[3px] border-t-[5px] border-black" />
      </div>
      <div className="flex flex-1 items-center justify-center">
        <Svg className="h-[17px] w-[18px]">
          <path d="M4 3l24 26M28 3L4 29" stroke="#000" strokeWidth="7.5" />
        </Svg>
      </div>
    </div>
  </div>
);

const StandardToolbar = () => (
  <div className="flex h-[50px] shrink-0 items-center">
    <div className="ml-[6px] flex h-[48px] w-[1234px] items-center rounded-l-md bg-linear-to-b from-[#fdfdfe] to-[#f0eff2] pb-[3px]">
      <div className="ml-[2px]"><Grip /></div>
      <Tool name="newdoc" /><Tool name="open" /><Tool name="save" /><Tool name="print" />
      <Sep className="mr-[2px]" />
      <Tool name="cut" /><Tool name="copy" /><Tool name="paste" /><Tool name="del" className="-ml-[1px]" />
      <Sep />
      <Tool name="undo" className="ml-[3px]" /><Tool name="redo" />
      <Sep className="ml-[1px]" />
      <Tool name="add" className="ml-[1px]" /><Caret className="ml-[2px]" />
      <Sep className="ml-[3px]" />
      <div className="ml-[3px] flex h-[42px] w-[296px] items-center justify-between border-2 border-[#7e7e80] bg-white pr-[8px] pl-[6px] font-['Liberation_Sans',sans-serif] text-[24px] leading-[28px]">
        <Fit className="mb-[4px] w-[82px]">1:11,384</Fit>
        <Chevron dir="down" className="h-5 w-[19px]" />
      </div>
      <Sep /><Tool name="editor" /><Sep />
      <Tool name="tocwin" className="ml-[3px]" /><Tool name="catalog" /><Tool name="search" /><Tool name="toolbox" /><Tool name="python" />
      <Sep /><Tool name="model" />
      <Overflow className="ml-[4px] h-[45px] self-start" />
    </div>
  </div>
);

const ToolsToolbar = () => (
  <div className="flex h-[52px] shrink-0 items-center pb-[1px]">
    <div className="ml-[6px] flex h-[50px] w-[1049px] items-center rounded-l-md bg-linear-to-b from-[#fdfdfe] to-[#f0eff2] pb-[2px]">
      <div className="ml-[2px]"><Grip /></div>
      <Tool name="zoomin" /><Tool name="zoomout" />
      <Tool name="hand" className="border-2 border-[#5ab0f5] bg-[#deebf7]" />
      <Tool name="globe" />
      <Sep className="mr-[2px]" />
      <Tool name="shrink" /><Tool name="grow" />
      <Sep className="mr-[3px]" />
      <Tool name="back" className="mr-[-2px]" /><Tool name="fwd" />
      <Sep />
      <Tool name="select" className="ml-[4px]" /><Caret />
      <Tool name="clear" className="ml-[6px]" />
      <Sep />
      <Tool name="pointer" className="ml-[1px]" />
      <Sep />
      <Tool name="info" /><Tool name="bolt" /><Tool name="html" />
      <Sep />
      <Tool name="measure" className="ml-[3px]" />
      <Sep />
      <Tool name="binoc" className="ml-[1px]" /><Tool name="route" className="ml-[2px]" /><Tool name="xy" />
      <Sep />
      <Tool name="clock" className="ml-[2px]" />
      <Sep />
      <Tool name="viewer" className="ml-[1px]" />
      <Overflow className="ml-[4px] h-[48px]" />
    </div>
  </div>
);

const Toc = () => (
  <div className="flex w-[400px] shrink-0 flex-col">
    <div className="flex h-[49px] shrink-0 items-center bg-linear-to-r from-[#becfdf] to-[#d6e3f1] pl-[8px]">
      <Fit className="mt-[3px] w-[239px] text-[29px] leading-[40px] text-[#1c2634]">Table Of Contents</Fit>
      <Svg className="ml-[97px] h-[20px] w-[14px]">
        <path d="M7 2h18v16H7zM2 19h28M16 19v13" stroke="#111" strokeWidth="4" />
        <path d="M21 2v16" stroke="#111" strokeWidth="6" />
      </Svg>
      <Svg className="ml-[15px] h-[16px] w-[18px]">
        <path d="M3 2l26 28M29 2L3 30" stroke="#111" strokeWidth="6" />
      </Svg>
    </div>
    <div className="flex h-[53px] shrink-0 items-center bg-linear-to-b from-[#f8f8fa] to-[#f0eff1] pb-[1px] pl-[8px]">
      <Tool name="listOrder" className="border-2 border-[#5aa9de] bg-[#e2eefa]" />
      <Tool name="source" className="mr-[-1px]" />
      <Tool name="visibility" className="ml-[1px]" /><Tool name="selection" />
      <Sep />
      <Tool name="options" className="ml-[1px]" />
    </div>
    <div className="flex h-[787px] w-[398px] flex-col overflow-hidden border-2 border-[#98979a] bg-[#fefefe] text-[24px] leading-[34px] text-[#2b2b33]">
      <div className="mt-[2px] flex h-[36px] shrink-0 items-center pl-[16px]">
        <Minus />
        <Svg className="ml-[12px] h-[26px] w-[33px]">{icons.layers}</Svg>
        <Fit className="mb-[2px] ml-[9px] w-[70px] font-bold text-black">Layers</Fit>
      </div>
      {tocRows.map(([label, w, checked, swatch]) => (
        <div key={label} className="shrink-0">
          <div className="flex h-[36px] items-center pl-[54px]">
            <Minus />
            <Check checked={checked} className="ml-[16px] h-[22px] w-[22px] border-[#2b2b2d]" />
            <Fit className={"mb-[5px] ml-[16px] " + w}>{label}</Fit>
          </div>
          <div className="flex h-[36px] items-center pl-[118px]">
            {swatch ? <div className={"h-[22px] w-[30px] border-2 " + swatch} /> : <div className="-ml-[2px] h-[6px] w-[34px] rounded-full bg-[#b2b2b2]" />}
          </div>
        </div>
      ))}
      <div className="mt-auto mb-[3px] ml-[2px] flex h-[32px] w-[389px] border-2 border-[#c6c5c7]">
        <div className="flex w-[31px] items-center justify-center"><Chevron dir="left" /></div>
        <div className="my-[-2px] flex w-[266px] items-center justify-center border-2 border-[#b5b4b6] bg-[#dddcdd]"><Lines3 /></div>
        <div className="ml-auto flex w-[34px] items-center justify-center border-l-2 border-[#c6c5c7]"><Chevron dir="right" /></div>
      </div>
    </div>
  </div>
);

const MapPane = () => (
  <div className="ml-[9px] flex w-[1671px] shrink-0 border-t-[3px] border-[#7f7f82]">
    <div className="w-[1638px] shrink-0">
      <div className="border-l-[3px] border-[#807f82]">
        <MapView />
      </div>
      <div className="h-[4px] bg-[#fbfbfc]" />
      <div className="flex h-[30px] items-stretch bg-[#f0eff1]">
        <div className="w-[3px] bg-[#807f82]" />
        <div className="flex w-[34px] items-center justify-center border-2 border-t-0 border-[#4cabe6] bg-[#dcebfb]">
          <Svg className="mb-[1px] h-[17px] w-[17px]">
            <rect x="2" y="2" width="28" height="28" fill="#dfe58e" stroke="#3d3f3a" strokeWidth="4.5" />
            <path d="M14 28C14 16 26 18 27 6v22z" fill="#a9d6dc" />
            <path d="M5 27L18 5" stroke="#7fa548" strokeWidth="3" />
          </Svg>
        </div>
        <div className="ml-[9px] flex items-center pb-[3px]">
          <Svg className="h-[17px] w-[15px]">
            <path d="M3 3h17l9 8v18H3z" fill="#fff" stroke="#3d3f42" strokeWidth="5" />
            <path d="M9 12h9M14 18h10M9 24h8" stroke="#2f7fc0" strokeWidth="3.4" />
          </Svg>
        </div>
        <div className="ml-[9px] w-[2px] bg-[#a5a4a7]" />
        <div className="ml-[21px] flex items-center pb-[3px]">
          <Svg className="h-[18px] w-[19px]">
            <path d="M4 12C8 2 20 0 27 8M28 20C24 30 12 32 5 24" stroke="#1c4f8c" strokeWidth="4" />
            <path d="M31 2v12H19zM1 30V18h12z" fill="#1c4f8c" />
          </Svg>
        </div>
        <div className="ml-[19px] flex items-center gap-[4px] pb-[3px]">
          <div className="h-[14px] w-[4px] bg-[#1f4f96]" />
          <div className="h-[14px] w-[4px] bg-[#1f4f96]" />
        </div>
        <div className="ml-[12px] flex flex-1 border-b-2 border-l-2 border-[#c6c5c7] bg-[#fdfdfe]">
          <div className="flex w-[33px] items-center justify-center border-r-2 border-[#c6c5c7] pb-[2px]"><Chevron dir="left" className="h-[18px] w-[20px]" /></div>
          <div className="ml-[345px] flex w-[665px] items-center justify-center border-2 border-b-0 border-[#b5b4b6] bg-[#dddcdd] pb-[2px]"><Lines3 /></div>
          <div className="ml-auto flex w-[34px] items-center justify-center border-x-2 border-[#c6c5c7] pb-[2px]"><Chevron dir="right" className="h-[18px] w-[20px]" /></div>
        </div>
      </div>
    </div>
    <div className="ml-[3px] flex w-[30px] flex-col border-r-2 border-[#c6c5c7]">
      <div className="flex h-[849px] flex-col bg-[#fdfdfe]">
        <div className="flex h-[34px] items-center justify-center border-b-2 border-[#c6c5c7] pt-[3px]"><Chevron dir="up" className="h-[15px] w-[17px]" /></div>
        <div className="mt-[299px] flex h-[187px] items-center justify-center border-2 border-[#b5b4b6] bg-[#dddcdd]"><Lines3 vertical /></div>
        <div className="mt-auto flex h-[33px] items-center justify-center border-y-2 border-[#c6c5c7]"><Chevron dir="down" className="h-[15px] w-[17px]" /></div>
      </div>
    </div>
  </div>
);

const SideTab = ({ icon, label, w, className }) => (
  <div className={"flex w-[40px] flex-col items-center rounded-l-md border-2 border-r-0 border-[#b4b3b6] bg-[#f0eff1] " + className}>
    <Svg className="mt-[8px] h-[32px] w-[33px]">{icons[icon]}</Svg>
    <div className="mt-[7px] mr-[2px] font-['Liberation_Sans',sans-serif] text-[23px] leading-[28px] text-[#5b5b66] [writing-mode:vertical-rl]">
      <span className={w}>{label}</span>
    </div>
  </div>
);

export default function App() {
  return (
    <div className="relative flex h-[1153px] w-[2151px] flex-col overflow-hidden bg-[#cdcbcd] font-['Noto_Sans',sans-serif]">
      <TitleBar />
      <div className="ml-[10px] flex h-[1086px] w-[2128px] flex-col border-t-2 border-b border-[#b9b8ba] bg-linear-to-r from-[#f1f0f2] via-[#f5f4f6] to-[#fcfbfd]">
        <div className="flex h-[50px] shrink-0 items-center text-[24px] leading-[34px] text-[#1c1c28]">
          {menu.map(([label, cls]) => (
            <Fit key={label} className={"mb-[4px] " + cls}>{label}</Fit>
          ))}
        </div>
        <StandardToolbar />
        <ToolsToolbar />
        <div className="flex h-[889px] shrink-0">
          <Toc />
          <MapPane />
          <div className="flex flex-1 flex-col items-end bg-[#fafafc] pt-[3px]">
            <SideTab icon="catalogTab" label="Catalog" w="tracking-[1.2px]" className="h-[144px]" />
            <SideTab icon="search" label="Search" w="tracking-[0.6px]" className="h-[134px]" />
          </div>
        </div>
        <div className="flex flex-1 items-center justify-end bg-[#f0eff1] text-[24px] leading-[30px] text-[#222]">
          <Fit className="mt-[2px] w-[336px]">{"-79.383  43.674 Decimal Degrees"}</Fit>
          <Svg className="mt-[14px] mr-[5px] ml-[187px] h-[18px] w-[16px]">
            <path d="M24 2h5v4h-5zM13 13h5v4h-5zM24 13h5v4h-5zM2 25h5v4H2zM13 25h5v4h-5zM24 25h5v4h-5z" fill="#bcbbbe" />
          </Svg>
        </div>
      </div>
      <Dialog />
    </div>
  );
}
